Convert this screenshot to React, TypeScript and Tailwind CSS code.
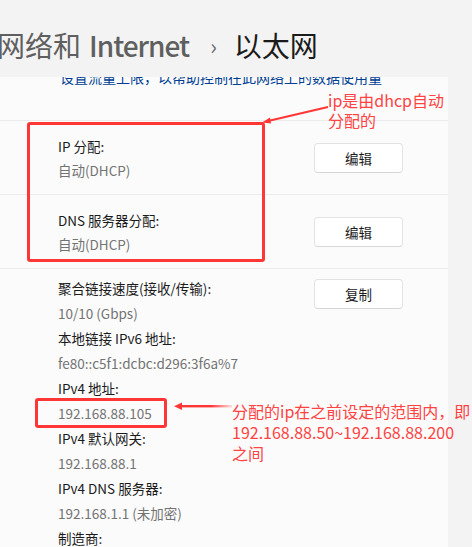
const cjk = 'font-["Noto_Sans_CJK_SC",sans-serif]';

function Row({ label, value, action }: { label: string; value: string; action: string }) {
  return (
    <div className="flex items-center border-t border-[#ebebeb] pt-[13px] pb-[12px] pl-[58px] pr-[45px]">
      <div className="flex-1 leading-[24px]">
        <div className="text-[#1b1b1b]">{label}</div>
        <div className="text-[#737373]">{value}</div>
      </div>
      <button className="h-[30px] w-[89px] rounded-[4px] border border-[#e3e3e3] border-b-[#d6d6d6] bg-white text-[#1b1b1b]">
        {action}
      </button>
    </div>
  );
}

const props: [string, string][] = [
  ['聚合链接速度(接收/传输):', '10/10 (Gbps)'],
  ['本地链接 IPv6 地址:', 'fe80::c5f1:dcbc:d296:3f6a%7'],
  ['IPv4 地址:', '192.168.88.105'],
  ['IPv4 默认网关:', '192.168.88.1'],
  ['IPv4 DNS 服务器:', '192.168.1.1 (未加密)'],
  ['制造商:', 'Realtek'],
];

export default function App() {
  return (
    <div className={`relative h-[547px] w-[472px] overflow-hidden bg-[#f3f3f3] text-[13.5px] ${cjk}`}>
      {/* breadcrumb header */}
      <div className="flex h-[77px] items-start whitespace-nowrap pt-[27px] text-[28px] leading-[36px]">
        <span className="ml-[-3px] text-[#5f5f5f]">网络和</span>
        <span className="ml-[8px] font-medium tracking-[-1px] text-[#5f5f5f]">Internet</span>
        <span className="ml-[21px] text-[22px] text-[#6a6a6a]">›</span>
        <span className="ml-[17px] text-[#1b1b1b]">以太网</span>
      </div>

      {/* settings card, scrolled under header */}
      <div className="w-[448px] overflow-hidden bg-[#fbfbfb]">
        <div className="h-[43px] overflow-hidden">
          <div className="mt-[-10px] pl-[60px] text-[14px] leading-[20px] text-[#003e92]">
            设置流量上限，以帮助控制在此网络上的数据使用量
          </div>
        </div>
        <Row label="IP 分配:" value="自动(DHCP)" action="编辑" />
        <Row label="DNS 服务器分配:" value="自动(DHCP)" action="编辑" />
        <div className="flex border-t border-[#ebebeb] pl-[58px] pr-[45px] pt-[7px]">
          <div className="flex-1 leading-[25px]">
            {props.map(([k, v]) => (
              <div key={k}>
                <div className="text-[#1b1b1b]">{k}</div>
                <div className="text-[#737373]">{v}</div>
              </div>
            ))}
          </div>
          <button className="mt-[3px] h-[30px] w-[89px] rounded-[4px] border border-[#e3e3e3] border-b-[#d6d6d6] bg-white text-[#1b1b1b]">
            复制
          </button>
        </div>
      </div>

      {/* annotations */}
      <div className="absolute left-[27px] top-[122px] h-[140px] w-[238px] rounded-[3px] border-[3px] border-[#ff3636]" />
      <div className="absolute left-[35px] top-[398px] h-[30px] w-[132px] rounded-[3px] border-[3px] border-[#ff3636]" />
      <svg className="pointer-events-none absolute left-0 top-0" width="472" height="547">
        <defs>
          <linearGradient id="fade" x1="0" x2="1" y1="0" y2="0">
            <stop offset="0" stopColor="#ff3636" />
            <stop offset="0.6" stopColor="#ff3636" />
            <stop offset="1" stopColor="#ff3636" stopOpacity="0.15" />
          </linearGradient>
        </defs>
        <line x1="328" y1="107" x2="268" y2="121" stroke="#ff3636" strokeWidth="2.2" />
        <polygon points="262,122.5 270,117.5 271,123.5" fill="#ff3636" />
        <rect x="180" y="405" width="52" height="2.4" fill="url(#fade)" />
        <polygon points="174,406.2 182,402.5 182,410" fill="#ff3636" />
      </svg>
      <div className="absolute left-[328px] top-[90px] text-[16px] leading-[20px] text-[#ff4343]">
        <div>ip是由dhcp自动</div>
        <div>分配的</div>
      </div>
      <div className="absolute left-[232px] top-[401px] whitespace-nowrap text-[16px] leading-[21px] text-[#ff4343]">
        <div>分配的ip在之前设定的范围内，即</div>
        <div>192.168.88.50~192.168.88.200</div>
        <div>之间</div>
      </div>
    </div>
  );
}
